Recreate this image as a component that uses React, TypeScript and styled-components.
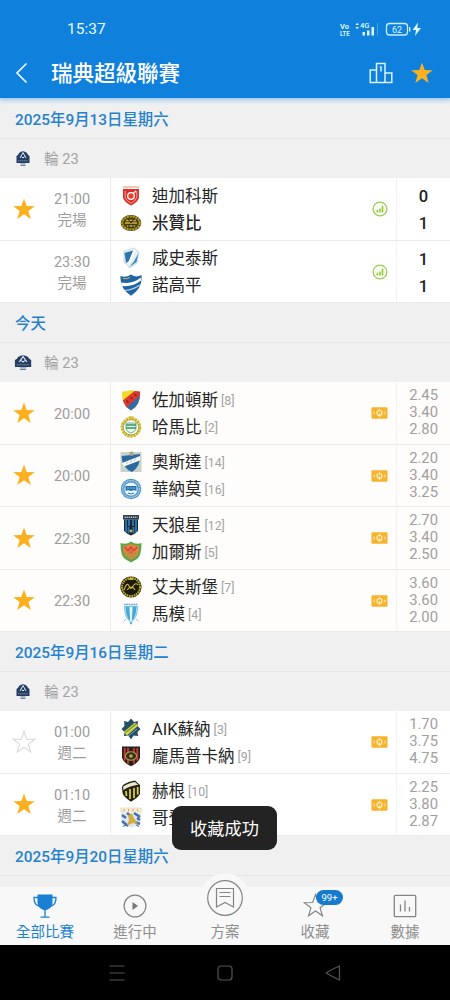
import type { ReactNode } from "react"
import styled, { createGlobalStyle } from "styled-components"

const GlobalStyle = createGlobalStyle`
    * {
        box-sizing: border-box;
    }
    body {
        margin: 0;
        background: #000;
        font-family: Roboto, "Noto Sans CJK TC", sans-serif;
    }
`

const Screen = styled.div`
    position: relative;
    display: flex;
    flex-direction: column;
    width: 450px;
    height: 1000px;
    overflow: hidden;
    background: #f0f0f0;
`

const Header = styled.header`
    position: relative;
    flex: none;
    height: 98px;
    background: #1080dd;
    color: #e9fbff;
    box-shadow: 0 1px 5px 1px #8ec4f2;
    z-index: 1;
`

const StatusBar = styled.div`
    display: flex;
    align-items: center;
    justify-content: space-between;
    height: 48px;
    padding: 10px 27px 0 67px;
    font-size: 15.5px;
    line-height: 20px;
`

const AppBar = styled.div`
    display: flex;
    align-items: center;
    height: 50px;
    padding: 0 18px 0 14px;
`

const Title = styled.h1`
    flex: 1;
    margin: 2px 0 0 21px;
    color: #fff;
    font-size: 21.5px;
    font-weight: 500;
    line-height: 30px;
`

const HeaderActions = styled.div`
    display: flex;
    align-items: center;
    gap: 18px;
`

const List = styled.main`
    height: 789px;
    overflow: hidden;
    padding-top: 1px;
`

const DateHeader = styled.h2`
    height: 40px;
    margin: 0;
    padding: 0 15px;
    border-bottom: 1px solid #e6e6e6;
    color: #2582cd;
    font-size: 15.4px;
    font-weight: 500;
    line-height: 43px;
`

const RoundHeader = styled.div`
    display: flex;
    align-items: center;
    gap: 12px;
    height: 39px;
    padding-left: 14px;
    color: #a3a3a3;
    font-size: 14.6px;
    line-height: 20px;
`

const Row = styled.div<{ $tint?: boolean }>`
    display: grid;
    grid-template-columns: 111px 1fr 53px;
    height: 62.5px;
    border-bottom: 1px solid #ebebeb;
    background: ${props => props.$tint ? "#fffdfb" : "#fff"};
`

const InfoCell = styled.div`
    display: grid;
    grid-template-columns: 34px 1fr;
    align-items: center;
    padding-left: 14px;
    border-right: 1px solid #ececec;
`

const StarSlot = styled.div`
    display: flex;
    width: 20px;
`

const Kickoff = styled.div`
    padding-right: 14px;
    padding-top: 3px;
    color: #9c9c9c;
    font-size: 14.5px;
    line-height: 21px;
    text-align: center;
`

const TeamsCell = styled.div`
    display: flex;
    align-items: center;
    justify-content: space-between;
    padding: 1px 8px 0 9px;
    border-right: 1px solid #f3f3f3;
`

const Team = styled.div<{ $winner?: boolean }>`
    display: flex;
    align-items: center;
    height: 27px;
    color: #262626;
    font-size: 16.5px;
    font-weight: ${props => props.$winner ? 500 : 400};
    line-height: 24px;
    white-space: nowrap;

    svg {
        margin-right: 10px;
    }
`

const TeamName = styled.span`
    padding-top: 2px;
`

const Rank = styled.span`
    margin: 2px 0 0 3px;
    color: #a2a2a2;
    font-size: 12.3px;
`

const Badge = styled.div`
    display: flex;
    justify-content: center;
    width: 17px;
`

const Scores = styled.div`
    padding-top: 5px;
    color: #222;
    font-size: 16.5px;
    font-weight: 500;
    line-height: 27px;
    text-align: center;
`

const Odds = styled.div`
    padding: 5px 12px 0 0;
    color: #a0a0a0;
    font-size: 14.8px;
    line-height: 17.2px;
    text-align: right;
`

const TabBar = styled.nav`
    position: relative;
    flex: none;
    display: grid;
    grid-template-columns: repeat(5, 1fr);
    grid-template-rows: 58px;
    height: 58px;
    background: #f8f8f8;
`

const Tab = styled.div<{ $active?: boolean }>`
    position: relative;
    display: flex;
    flex-direction: column;
    align-items: center;
    justify-content: flex-end;
    padding-bottom: 2.5px;
    color: ${props => props.$active ? "#1a80d4" : "#8e8e8e"};
    font-size: 14.5px;
    line-height: 21px;
`

const TabIcon = styled.div<{ $raised?: boolean }>`
    display: flex;
    align-items: center;
    justify-content: center;
    flex: none;
    width: ${props => props.$raised ? 50 : 26}px;
    height: ${props => props.$raised ? 50 : 26}px;
    margin-bottom: ${props => props.$raised ? -1 : 3}px;
    border-radius: 50%;
    background: ${props => props.$raised ? "#f8f8f8" : "transparent"};
`

const Count = styled.span`
    position: absolute;
    top: 3px;
    left: 46px;
    width: 27px;
    height: 14.5px;
    border-radius: 8px;
    background: #167bd0;
    color: #fff;
    font-size: 9.5px;
    line-height: 15px;
    text-align: center;
`

const SystemNav = styled.footer`
    flex: none;
    display: flex;
    align-items: center;
    justify-content: center;
    gap: 92px;
    height: 55px;
    background: #000;
`

const Toast = styled.div`
    position: absolute;
    top: 806px;
    left: 172px;
    z-index: 2;
    width: 105px;
    height: 44px;
    border-radius: 9px;
    background: #232323;
    color: #fff;
    font-size: 17.2px;
    line-height: 47px;
    text-align: center;
`

const STAR = "M12 1.5 L14.7 9.1 L22.8 9.3 L16.4 14.1 L18.7 21.9 L12 17.3 L5.3 21.9 L7.6 14.1 L1.2 9.3 L9.3 9.1 Z"

const StarSvg = styled.svg`
    flex: none;
    margin: 0 -2px;
`

function Star({ size = 24, filled = true, stroke = "#d8d8d8" }: { size?: number; filled?: boolean; stroke?: string }) {
    return (
        <StarSvg width={size} height={size} viewBox="0 0 24 24">
            <path d={STAR} fill={filled ? "#fbb01f" : "none"} stroke={filled ? "none" : stroke} strokeWidth="1.1" />
        </StarSvg>
    )
}

const crests: Record<string, ReactNode> = {
    degerfors: <>
        <path d="M3 2 H19" stroke="#e9b488" strokeWidth="1.4" />
        <path d="M3 4 H19 V13 Q17 18 11 20.5 Q5 18 3 13 Z" fill="#df2f2b" />
        <path d="M5.2 6 V12.5 Q7 16.5 11 18.3 Q15 16.5 16.8 12.5 V6" fill="none" stroke="#f6c3b4" strokeWidth=".8" />
        <circle cx="11" cy="11" r="3.3" fill="#e8402f" stroke="#fff" strokeWidth="1.3" />
        <path d="M13 8.5 L16 6" stroke="#fff" strokeWidth="1.2" />
    </>,
    mjallby: <>
        <ellipse cx="11" cy="11" rx="10.3" ry="8" fill="#4c4212" />
        <ellipse cx="11" cy="11" rx="8.8" ry="6.6" fill="none" stroke="#b29b28" strokeWidth="2" strokeDasharray="2.2 .7" />
        <path d="M6 8.5 H16 M5 11 H17 M7 14 H15" stroke="#c9b244" strokeWidth="1.5" />
        <path d="M8 7 L11 11 L14 7 M9 12 V16 M13 12 V16" stroke="#29240c" strokeWidth="1" fill="none" />
    </>,
    halmstad: <>
        <path d="M4 4 L14 1 L19 5 L17 16 L10 21 L4 15 Z" fill="#e3eef3" stroke="#b9d0dc" strokeWidth=".7" />
        <path d="M4.5 6 L13 3.5 L9 14 L6 16 Z" fill="#2d75ad" />
        <path d="M18.5 6 L16.5 15 L9.5 20 Q15 14 18.5 6Z" fill="#3f88ba" />
        <path d="M15 3 L9 16" stroke="#fff" strokeWidth="1.8" />
    </>,
    norrkoping: <>
        <path d="M.5 2 Q6 4 11 .5 Q16 4 21.5 1 Q23 14 11 21.8 Q-.5 14 .5 2Z" fill="#1f64a3" />
        <path d="M1 8.5 Q13 10.5 20.7 3.5 L21 6.5 Q13 13 2 12 Z" fill="#fff" />
        <path d="M5 16.5 Q14 15.5 19.5 11" stroke="#b7d2e4" strokeWidth="1.1" fill="none" />
        <path d="M3 4.5 Q7 5.5 10 3.5" stroke="#d7b24c" strokeWidth="1" fill="none" />
    </>,
    djurgarden: <>
        <path d="M2 2.5 Q7 2.5 11 1 Q15 2.5 20 2.5 Q21 16 11 21.5 Q1 16 2 2.5Z" fill="#f4d929" />
        <path d="M20 2.5 Q21 16 11 21.5 Q7.5 19.5 5.5 17 L19.5 4.5 Z" fill="#2f6ca9" />
        <path d="M2.8 11.5 L14.5 2 L20 2.5 L20.1 6.5 L6.8 18.2 Q4 15 2.8 11.5Z" fill="#d8392c" />
        <path d="M6.5 11.5 L8.5 13.5 M10.5 8.2 L12.5 10.2 M14.5 5 L16.5 7" stroke="#84202a" strokeWidth="1.3" />
    </>,
    hammarby: <>
        <circle cx="11" cy="11.3" r="8.8" fill="#fff" stroke="#cdb52b" strokeWidth="3" strokeDasharray="2.4 .6" />
        <circle cx="11" cy="11.3" r="7.7" fill="none" stroke="#96991d" strokeWidth=".7" />
        <path d="M6 7 H16 V13 Q15 16 11 17 Q7 16 6 13 Z" fill="#e9f6ec" stroke="#4b9d6b" strokeWidth=".8" />
        <path d="M6 9 H16 M6 12 H16" stroke="#349466" strokeWidth="1.5" />
        <rect x="8.5" y=".3" width="5" height="2" fill="#dfbd30" />
    </>,
    oster: <>
        <rect x=".5" y="1" width="21" height="20" fill="#c9d1cd" />
        <path d="M1.5 5 Q11 4 20 3 Q21 15 12 21 Q2 17 1.5 5Z" fill="#2a6a9e" />
        <path d="M2 12 L20 5 V9.5 L4 15.5Z" fill="#f7fafa" />
        <path d="M6 13 L8 11 M10 12 L12 9 M14 10 L16 7" stroke="#b5c7ce" />
        <circle cx="11.5" cy="2.8" r="2.2" fill="#aaa17d" />
    </>,
    varnamo: <>
        <circle cx="11" cy="11" r="10.2" fill="#4e96cb" />
        <circle cx="11" cy="11" r="8.4" fill="none" stroke="#b5d7ed" strokeWidth="1.3" strokeDasharray="1 .6" />
        <circle cx="11" cy="11" r="6.6" fill="#e9f5fb" />
        <path d="M5.5 8 H16.5 V13 Q14 11.5 11 13 Q8 11.5 5.5 13Z" fill="#2672af" />
        <path d="M8 15 Q11 17 14 15" stroke="#327ab1" fill="none" />
        <path d="M8 9 V11 M11 9 V11 M14 9 V11" stroke="#8dbddc" />
    </>,
    sirius: <>
        <path d="M3 1 H19 V5.5 H3Z" fill="#30424f" />
        <path d="M4.5 3.2 H17.5" stroke="#a9bac2" strokeWidth="1.4" strokeDasharray="1.4 .7" />
        <path d="M4 5.5 H18 V17 Q15 20 11 21.5 Q7 20 4 17Z" fill="#1c252d" />
        <path d="M6 6 V18 M9 6 V12 M13 6 V12 M16 6 V18 M8.5 13 V19.5 M13.5 13 V19.5" stroke="#2a79bb" strokeWidth="1.8" />
        <circle cx="11" cy="17" r="1.4" fill="#cbb653" />
    </>,
    gais: <>
        <path d="M.5 2 Q6 4 11 .5 Q16 4 21.5 2 Q21.5 15 17 18 L11 21.5 L5 18 Q.5 15 .5 2Z" fill="#58a84b" />
        <path d="M3 4.5 Q7 5.5 11 2.7 Q15 5.5 19 4.5 Q19.5 13 16 16 L11 18.5 L6 16 Q2.5 13 3 4.5Z" fill="#e58440" />
        <path d="M4.5 6 L8 9.5 L11 6 L14 9.5 L17.5 6" fill="none" stroke="#d8433b" strokeWidth="1.6" />
        <path d="M4 12.5 H18 M6 15.5 H16" stroke="#77a145" strokeWidth="1.5" strokeDasharray="2.2 1.2" />
        <circle cx="11" cy="11" r="1.9" fill="#d8653b" />
    </>,
    elfsborg: <>
        <circle cx="11" cy="11" r="10.6" fill="#1e1d0d" />
        <circle cx="11" cy="11" r="9" fill="none" stroke="#b9aa24" strokeWidth="2" strokeDasharray="1.7 .7" />
        <circle cx="11" cy="11" r="7.4" fill="#1b1a10" />
        <path d="M4 14 Q7 5 9 10 T13 10 Q16 6 18 9 M7 14 Q12 8 15 14" stroke="#d0bf37" strokeWidth="1.1" fill="none" />
        <path d="M8 4 L11 1.2 L14 4" fill="#cabb2b" />
    </>,
    malmo: <>
        <path d="M4 1.5 H18" stroke="#66aed6" strokeWidth="1.7" strokeDasharray="1.8 .5" />
        <path d="M4.5 3.5 H17.5 Q17.5 15 11 19.5 Q4.5 15 4.5 3.5Z" fill="#e8f7fd" stroke="#5bb2dd" strokeWidth=".8" />
        <path d="M5.5 3.7 H9.4 L10.2 17.8 Q5.5 14 5.5 3.7Z M12.6 3.7 H16.5 Q16.5 14 11.8 17.8Z" fill="#48a8da" />
        <path d="M6 16 L3.5 18.5 M16 16 L18.5 18.5" stroke="#95c9e2" />
        <path d="M9.5 19.5 H12.5 L11 21.8Z" fill="#3594cb" />
    </>,
    aik: <>
        <path d="M11 .5 L14 4 L18 3 L17.5 8 L20.5 11 L17.5 14 L18 18 L13.5 17.5 L11 21.5 L8.5 17.5 L4 18 L4.5 14 L1.5 11 L4.5 8 L4 3 L8 4Z" fill="#244d66" />
        <path d="M3.5 14 L15 4.5 L18.3 7.5 L7 17.5Z" fill="#d0d540" />
        <path d="M5.5 14.5 L16 6" stroke="#6d9451" strokeWidth="1.1" />
        <path d="M8 18.3 L17 11" stroke="#7ba5b8" strokeWidth="1" />
    </>,
    brommapojkarna: <>
        <path d="M2 1.5 H20 V13 Q18.5 18 11 21.3 Q3.5 18 2 13Z" fill="#26231d" />
        <path d="M4.7 3 V15.5 M8 3 V8 M14 3 V8 M17.3 3 V15.5 M8 15 V18.8 M14 15 V18.8" stroke="#c9362c" strokeWidth="1.9" />
        <ellipse cx="11" cy="11" rx="5.6" ry="4.3" fill="#37301b" stroke="#a99953" strokeWidth="1.1" />
        <circle cx="11" cy="11" r="1.8" fill="#bda94f" />
    </>,
    hacken: <>
        <path d="M2 7 Q2.5 3 15 .5 L20 5 V14 Q17.5 18 11 21.7 Q3.5 17 2.5 13Z" fill="#26241a" />
        <path d="M3 6.8 Q7 3.5 15 2 L18.3 4.8 Q10 5.8 3.5 10Z" fill="#ece7cd" />
        <path d="M6 11 L6.5 16 M10 9 V19 M14 8 V18 M17.7 7 V14.5" stroke="#ded34b" strokeWidth="1.7" />
    </>,
    goteborg: <>
        <path d="M.8 1 H21.2 V5 H.8Z" fill="#f2eee0" stroke="#e3d09a" strokeWidth=".6" />
        <path d="M4 2 V4.3 M8.5 2 V4.3 M13 2 V4.3 M17.5 2 V4.3" stroke="#dba14d" />
        <path d="M.8 6 H21.2 L20 18 L11 20.5 L2 18Z" fill="#dfe7ef" />
        <path d="M2 8 L6 11 M7 6 L12 10 M14 6 L20 10 M2 14 L8 19 M15 15 L20 17 M17 11 L20 13" stroke="#4471ae" strokeWidth="2.5" />
        <path d="M8 8 L12 6.5 L14 11 L18 17 L13 16 L7 18.5 L9 13Z" fill="#d1ad43" />
        <path d="M3 19.5 L6 18 M16 18 L19 19.5" stroke="#3c6499" />
    </>,
}

function Crest({ name }: { name: string }) {
    return <svg width="22" height="22" viewBox="0 0 22 22">{crests[name]}</svg>
}

function LeagueLogo({ wide }: { wide?: boolean }) {
    return (
        <svg width="18" height="18" viewBox="0 0 18 18">
            <g transform={wide ? "translate(-2.2 0) scale(1.25 1)" : undefined}>
                <path d="M2.5 6 Q4.5 5 5 3 Q9 -.4 13 3 Q13.5 5 15.5 6 V13 H2.5Z" fill="#243e63" />
                <path d="M6 8 L9 2.5 L12 8 M7.5 6.5 L9 8 L10.5 6.5" fill="none" stroke="#dde7ef" strokeWidth="1" />
                <path d="M4 10.8 H14" stroke="#7189a6" strokeWidth="1" strokeDasharray="1.5 .4" />
                <path d="M6 13 H12 L11 14.5 H7Z" fill="#aab6c3" />
                <path d="M6.5 15.3 H11.5" stroke="#475b74" strokeWidth=".9" />
            </g>
        </svg>
    )
}

function StatsIcon() {
    return (
        <svg width="16" height="16" viewBox="0 0 16 16">
            <circle cx="8" cy="8" r="6.9" fill="#fbfff3" stroke="#9bcb57" strokeWidth="1.3" />
            <path d="M5.4 8.8 V11.5 M8 7.4 V11.5 M10.5 4.8 V11.5" stroke="#8fc63d" strokeWidth="1.6" />
        </svg>
    )
}

function LiveIcon() {
    return (
        <svg width="18" height="14" viewBox="0 0 18 14">
            <rect x=".5" y="1" width="17" height="12" rx="1" fill="#f8b32c" />
            <circle cx="9" cy="7" r="2.7" fill="none" stroke="#fff0cb" strokeWidth="1.2" />
            <path d="M9 2.5 V5 M9 7 V11.5 M3.3 5.5 V8.5 M14.7 5.5 V8.5" stroke="#fff0cb" strokeWidth="1" />
        </svg>
    )
}

function StatusIcons() {
    return (
        <svg width="84" height="18" viewBox="0 0 84 18" fontFamily="Roboto" fontWeight="700" fill="#dff8ff">
            <text x="1" y="8.5" fontSize="8" textLength="9" lengthAdjust="spacingAndGlyphs">Vo</text>
            <text x="1" y="15.8" fontSize="8" textLength="9.5" lengthAdjust="spacingAndGlyphs">LTE</text>
            <path d="M16.5 5 L18.2 2.8 L19.9 5Z M16.5 7 L18.2 9.2 L19.9 7Z" />
            <text x="21" y="8.2" fontSize="8" fontWeight="500" textLength="9.5" lengthAdjust="spacingAndGlyphs">4G</text>
            <path d="M23.5 12 H26 V15.5 H23.5Z M28 10.5 H30.5 V15.5 H28Z M32.5 7 H35 V15.5 H32.5Z" />
            <path d="M38.5 3 V15.5" stroke="#4aa0e6" strokeWidth="1" />
            <rect x="47.5" y="3.5" width="21" height="11.5" rx="3" fill="none" stroke="#c9edfd" strokeWidth="1.3" />
            <path d="M70 7 H71.3 V11.5 H70Z" />
            <text x="53" y="12.5" fontSize="9" fontWeight="400">62</text>
            <path d="M79 2.5 L73.5 10 H77 L76 16 L82 8 H78.3Z" />
        </svg>
    )
}

type Side = { name: string; crest: string; rank?: number; winner?: boolean }

type Match = {
    time: string
    note?: string
    star?: "on" | "off"
    tint?: boolean
    teams: Side[]
    scores?: number[]
    odds?: string[]
}

type Section = { date: string; round?: string; wideLogo?: boolean; matches: Match[] }

const sections: Section[] = [
    {
        date: "2025年9月13日星期六",
        round: "輪 23",
        matches: [
            { time: "21:00", note: "完場", star: "on", scores: [0, 1], teams: [{ name: "迪加科斯", crest: "degerfors" }, { name: "米贊比", crest: "mjallby", winner: true }] },
            { time: "23:30", note: "完場", scores: [1, 1], teams: [{ name: "咸史泰斯", crest: "halmstad" }, { name: "諾高平", crest: "norrkoping" }] },
        ],
    },
    {
        date: "今天",
        round: "輪 23",
        wideLogo: true,
        matches: [
            { time: "20:00", star: "on", tint: true, odds: ["2.45", "3.40", "2.80"], teams: [{ name: "佐加頓斯", crest: "djurgarden", rank: 8 }, { name: "哈馬比", crest: "hammarby", rank: 2 }] },
            { time: "20:00", star: "on", tint: true, odds: ["2.20", "3.40", "3.25"], teams: [{ name: "奧斯達", crest: "oster", rank: 14 }, { name: "華納莫", crest: "varnamo", rank: 16 }] },
            { time: "22:30", star: "on", tint: true, odds: ["2.70", "3.40", "2.50"], teams: [{ name: "天狼星", crest: "sirius", rank: 12 }, { name: "加爾斯", crest: "gais", rank: 5 }] },
            { time: "22:30", star: "on", tint: true, odds: ["3.60", "3.60", "2.00"], teams: [{ name: "艾夫斯堡", crest: "elfsborg", rank: 7 }, { name: "馬模", crest: "malmo", rank: 4 }] },
        ],
    },
    {
        date: "2025年9月16日星期二",
        round: "輪 23",
        matches: [
            { time: "01:00", note: "週二", star: "off", odds: ["1.70", "3.75", "4.75"], teams: [{ name: "AIK蘇納", crest: "aik", rank: 3 }, { name: "龐馬普卡納", crest: "brommapojkarna", rank: 9 }] },
            { time: "01:10", note: "週二", star: "on", odds: ["2.25", "3.80", "2.87"], teams: [{ name: "赫根", crest: "hacken", rank: 10 }, { name: "哥登堡", crest: "goteborg" }] },
        ],
    },
    { date: "2025年9月20日星期六", matches: [] },
]

function MatchRow({ match }: { match: Match }) {
    return (
        <Row $tint={match.tint}>
            <InfoCell>
                <StarSlot>{match.star && <Star filled={match.star === "on"} />}</StarSlot>
                <Kickoff>
                    <div>{match.time}</div>
                    {match.note && <div>{match.note}</div>}
                </Kickoff>
            </InfoCell>
            <TeamsCell>
                <div>
                    {match.teams.map(team => (
                        <Team key={team.name} $winner={team.winner}>
                            <Crest name={team.crest} />
                            <TeamName>{team.name}</TeamName>
                            {team.rank && <Rank>[{team.rank}]</Rank>}
                        </Team>
                    ))}
                </div>
                <Badge>{match.odds ? <LiveIcon /> : <StatsIcon />}</Badge>
            </TeamsCell>
            {match.scores && <Scores>{match.scores.map((score, i) => <div key={i}>{score}</div>)}</Scores>}
            {match.odds && <Odds>{match.odds.map((odd, i) => <div key={i}>{odd}</div>)}</Odds>}
        </Row>
    )
}

function Tabs() {
    return (
        <TabBar>
            <Tab $active>
                <TabIcon>
                    <svg width="26" height="26" viewBox="0 0 26 26" fill="none" stroke="#1a80d4" strokeWidth="1.3">
                        <path d="M5.5 1.5 H20.5 V10 Q20 15.5 13 17.5 Q6 15.5 5.5 10Z" fill="#1a80d4" stroke="none" />
                        <path d="M6 4.5 H2 Q1.8 11.5 7 13.2 M20 4.5 H24 Q24.2 11.5 19 13.2 M13 17 V24 M8.5 24.2 H17.5" />
                    </svg>
                </TabIcon>
                全部比賽
            </Tab>
            <Tab>
                <TabIcon>
                    <svg width="26" height="26" viewBox="0 0 26 26">
                        <circle cx="13" cy="13" r="10.9" fill="none" stroke="#858585" strokeWidth="1.2" />
                        <path d="M10.5 9 L16 13 L10.5 17Z" fill="#777" />
                    </svg>
                </TabIcon>
                進行中
            </Tab>
            <Tab>
                <TabIcon $raised>
                    <svg width="38" height="38" viewBox="0 0 38 38" fill="none" stroke="#858585" strokeWidth="1.2">
                        <circle cx="19" cy="19" r="17.3" />
                        <path d="M10.5 9.5 H27.5 V28 L19 23.5 L10.5 28Z M13.5 13.5 H24.5 M13.5 17.5 H24.5" />
                    </svg>
                </TabIcon>
                方案
            </Tab>
            <Tab>
                <TabIcon><Star size={25} filled={false} stroke="#858585" /></TabIcon>
                <Count>99+</Count>
                收藏
            </Tab>
            <Tab>
                <TabIcon>
                    <svg width="26" height="26" viewBox="0 0 26 26" fill="none" stroke="#858585" strokeWidth="1.3">
                        <rect x="2.3" y="2.3" width="21.4" height="21.4" rx="1" />
                        <path d="M8.5 11.5 V18.5 M13 7.5 V18.5 M17.5 14 V18.5" />
                    </svg>
                </TabIcon>
                數據
            </Tab>
        </TabBar>
    )
}

function App() {
    return (
        <Screen>
            <GlobalStyle />
            <Header>
                <StatusBar>
                    <span>15:37</span>
                    <StatusIcons />
                </StatusBar>
                <AppBar>
                    <svg width="16" height="24" viewBox="0 0 16 24">
                        <path d="M12.5 2.5 L3 12 L12.5 21.5" fill="none" stroke="#e9fbff" strokeWidth="1.7" />
                    </svg>
                    <Title>瑞典超級聯賽</Title>
                    <HeaderActions>
                        <svg width="26" height="24" viewBox="0 0 26 24" fill="none" stroke="#d8f4ff" strokeWidth="1.5">
                            <path d="M8.5 21.5 V2.5 H17 V21.5 M8.5 9 H2.2 V21.5 H23.8 V12 H17 M11.8 6 H13 V10.5" />
                        </svg>
                        <Star size={24} />
                    </HeaderActions>
                </AppBar>
            </Header>
            <List>
                {sections.map(section => (
                    <section key={section.date}>
                        <DateHeader>{section.date}</DateHeader>
                        <RoundHeader>
                            <LeagueLogo wide={section.wideLogo} />
                            {section.round}
                        </RoundHeader>
                        {section.matches.map((match, i) => <MatchRow key={i} match={match} />)}
                    </section>
                ))}
            </List>
            <Toast>收藏成功</Toast>
            <Tabs />
            <SystemNav>
                <svg width="16" height="18" viewBox="0 0 16 18" stroke="#555" strokeWidth="1.2">
                    <path d="M.5 2 H15.5 M.5 9 H15.5 M.5 16 H15.5" />
                </svg>
                <svg width="16" height="16" viewBox="0 0 16 16" fill="none" stroke="#555" strokeWidth="1.2">
                    <rect x="1" y="1" width="14" height="14" rx="3" />
                </svg>
                <svg width="16" height="16" viewBox="0 0 16 16" fill="none" stroke="#555" strokeWidth="1.2" strokeLinejoin="round">
                    <path d="M14.5 1 V15 Q7 11.5 1.2 8 Q7 4 14.5 1Z" />
                </svg>
            </SystemNav>
        </Screen>
    )
}

export default App
